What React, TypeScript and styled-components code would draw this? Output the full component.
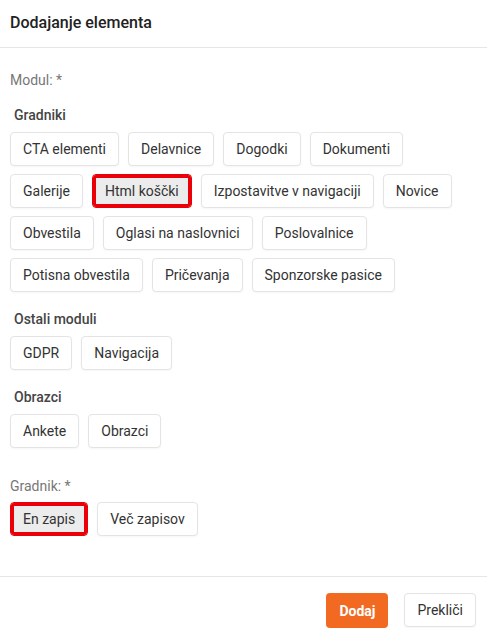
import React, { useState } from 'react';
import styled, { createGlobalStyle } from 'styled-components';

const groups = [
  {
    naziv: 'Gradniki',
    elementi: [
      'CTA elementi',
      'Delavnice',
      'Dogodki',
      'Dokumenti',
      'Galerije',
      'Html koščki',
      'Izpostavitve v navigaciji',
      'Novice',
      'Obvestila',
      'Oglasi na naslovnici',
      'Poslovalnice',
      'Potisna obvestila',
      'Pričevanja',
      'Sponzorske pasice',
    ],
  },
  { naziv: 'Ostali moduli', elementi: ['GDPR', 'Navigacija'] },
  { naziv: 'Obrazci', elementi: ['Ankete', 'Obrazci'] },
];

const gradniki = ['En zapis', 'Več zapisov'];

const App: React.FC = () => {
  const [modul, setModul] = useState('Html koščki');
  const [gradnik, setGradnik] = useState('En zapis');

  return (
    <>
      <GlobalStyle />
      <Dialog>
        <Header>
          <Title>Dodajanje elementa</Title>
        </Header>

        <Body>
          <FieldLabel>Modul: *</FieldLabel>
          {groups.map((g) => (
            <Group key={g.naziv}>
              <GroupTitle>{g.naziv}</GroupTitle>
              <Options>
                {g.elementi.map((e) => (
                  <Option key={e} $active={modul === e} onClick={() => setModul(e)}>
                    {e}
                  </Option>
                ))}
              </Options>
            </Group>
          ))}

          <Field>
            <FieldLabel>Gradnik: *</FieldLabel>
            <Options>
              {gradniki.map((e) => (
                <Option key={e} $active={gradnik === e} onClick={() => setGradnik(e)}>
                  {e}
                </Option>
              ))}
            </Options>
          </Field>
        </Body>

        <Footer>
          <PrimaryButton>Dodaj</PrimaryButton>
          <Option>Prekliči</Option>
        </Footer>
      </Dialog>
    </>
  );
};

export default App;

// Stili

const GlobalStyle = createGlobalStyle`
  body {
    margin: 0;
    background: #fff;
    font-family: Roboto, "Noto Sans", "Liberation Sans", sans-serif;
    color: #333;
  }
`;

const Dialog = styled.div`
  width: 487px;
  height: 636px;
  display: flex;
  flex-direction: column;
  background: #fff;
`;

const Header = styled.div`
  height: 48px;
  padding: 0 10px;
  display: flex;
  align-items: center;
  border-bottom: 1px solid #e6e6e6;
  box-sizing: border-box;
`;

const Title = styled.h1`
  margin: 0 0 2px;
  font-size: 16px;
  font-weight: 500;
  color: #222;
`;

const Body = styled.div`
  padding: 22px 10px 0;
  flex: 1;
`;

const FieldLabel = styled.div`
  font-size: 14px;
  line-height: 20px;
  color: #777;
  margin-bottom: 15px;
`;

const Group = styled.div`
  margin-bottom: 17px;

  &:nth-of-type(4) {
    margin-bottom: 28px;
  }
`;

const GroupTitle = styled.div`
  font-size: 14px;
  line-height: 20px;
  font-weight: 500;
  color: #454545;
  padding-left: 4px;
  margin-bottom: 7px;
`;

const Field = styled.div`
  ${FieldLabel} {
    margin-bottom: 6px;
  }
`;

const Options = styled.div`
  display: flex;
  flex-wrap: wrap;
  gap: 8px 9px;
`;

const Option = styled.button<{ $active?: boolean }>`
  height: 34px;
  padding: 0 12px;
  box-sizing: border-box;
  font-family: inherit;
  font-size: 14px;
  color: #333;
  background: ${(p) => (p.$active ? '#ececec' : '#fff')};
  border: 1px solid ${(p) => (p.$active ? '#ea0008' : '#e4e4e4')};
  border-radius: 4px;
  box-shadow: ${(p) =>
    p.$active ? 'inset 0 0 0 3px #ea0008' : '0 1px 2px rgba(0, 0, 0, 0.04)'};
  cursor: pointer;
`;

const Footer = styled.div`
  border-top: 1px solid #e6e6e6;
  padding: 16px 11px 8px;
  display: flex;
  justify-content: flex-end;
  gap: 16px;
`;

const PrimaryButton = styled.button`
  height: 35px;
  padding: 0 13px;
  font-family: inherit;
  font-size: 14px;
  font-weight: 700;
  color: #fff;
  background: #f26a21;
  border: none;
  border-radius: 4px;
  cursor: pointer;
`;
